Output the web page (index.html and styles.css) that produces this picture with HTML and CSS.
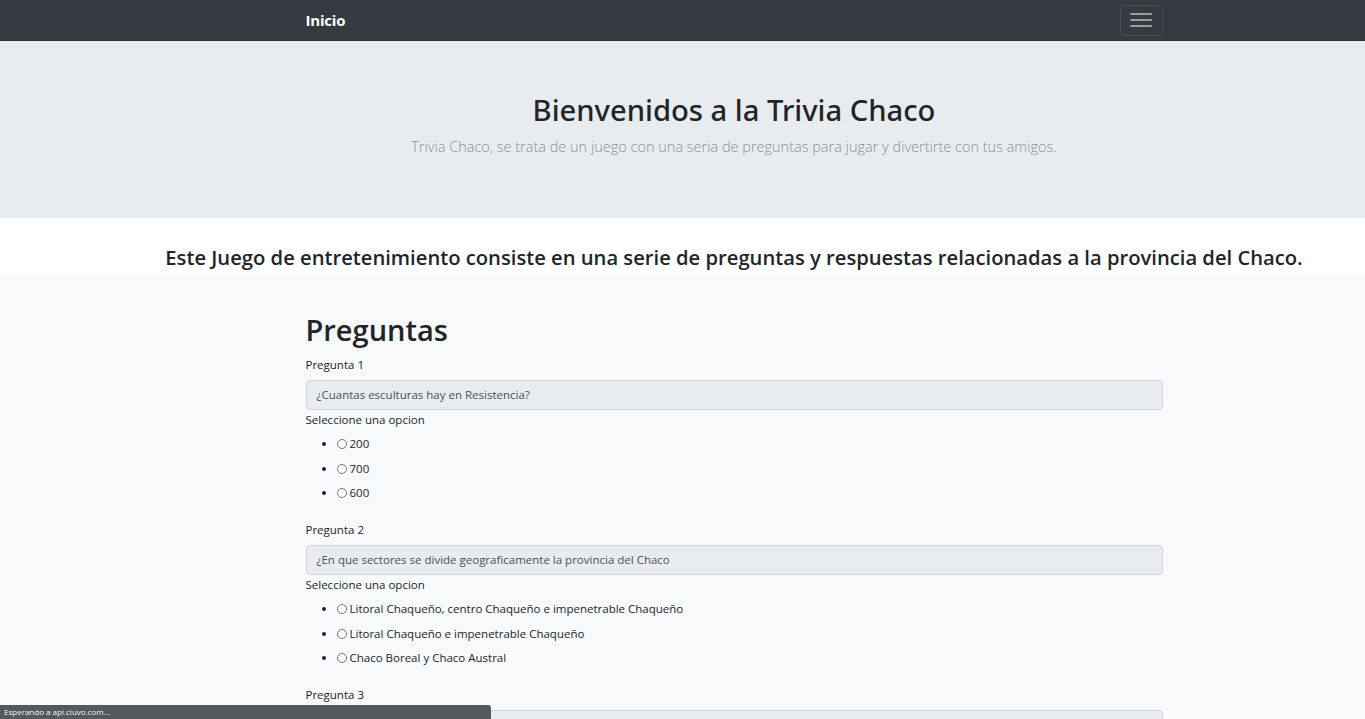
FILE: index.html
```html
<!DOCTYPE html>
<html lang="es">
<head>
<meta charset="utf-8">
<title>Trivia Chaco</title>
<link rel="stylesheet" href="styles.css">
</head>
<body>
<nav class="navbar">
  <div class="shift">
    <div class="container nav-inner">
      <a class="brand" href="#">Inicio</a>
      <button class="toggler" type="button" aria-label="menu">
        <svg width="22" height="16" viewBox="0 0 22 16"><path d="M1 2h20M1 8h20M1 14h20" stroke="rgba(255,255,255,0.5)" stroke-width="2" stroke-linecap="round"/></svg>
      </button>
    </div>
  </div>
</nav>
<header class="hero">
  <div class="shift hero-inner">
    <h1 class="hero-title">Bienvenidos a la Trivia Chaco</h1>
    <p class="hero-lead">Trivia Chaco, se trata de un juego con una seria de preguntas para jugar y divertirte con tus amigos.</p>
  </div>
</header>
<section class="intro">
  <div class="shift">
    <h4 class="intro-text">Este Juego de entretenimiento consiste en una serie de preguntas y respuestas relacionadas a la provincia del Chaco.</h4>
  </div>
</section>
<main class="content">
  <div class="shift">
    <div class="container">
      <h2 class="title">Preguntas</h2>
      <div class="question">
        <label class="qlabel">Pregunta 1</label>
        <div class="qbox">¿Cuantas esculturas hay en Resistencia?</div>
        <div class="qlabel">Seleccione una opcion</div>
        <ul class="options">
          <li><span class="radio"></span>200</li>
          <li><span class="radio"></span>700</li>
          <li><span class="radio"></span>600</li>
        </ul>
      </div>
      <div class="question">
        <label class="qlabel">Pregunta 2</label>
        <div class="qbox">¿En que sectores se divide geograficamente la provincia del Chaco</div>
        <div class="qlabel">Seleccione una opcion</div>
        <ul class="options">
          <li><span class="radio"></span>Litoral Chaqueño, centro Chaqueño e impenetrable Chaqueño</li>
          <li><span class="radio"></span>Litoral Chaqueño e impenetrable Chaqueño</li>
          <li><span class="radio"></span>Chaco Boreal y Chaco Austral</li>
        </ul>
      </div>
      <div class="question">
        <label class="qlabel">Pregunta 3</label>
        <div class="qbox">&nbsp;</div>
      </div>
    </div>
  </div>
</main>
<div class="status">Esperando a api.ciuvo.com...</div>
</body>
</html>
```
FILE: styles.css
```css
* { box-sizing: border-box; }
html, body { margin: 0; padding: 0; }
body {
  font-family: "Open Sans", "Noto Sans", sans-serif;
  background: #f8f9fa;
  color: #212529;
  overflow: hidden;
  height: 719px;
}
.shift { padding-left: 103px; }
.container { width: 857px; margin: 0 auto; }

.navbar {
  background: #343a40;
  height: 41px;
  border-bottom: 1px solid #2b3035;
}
.nav-inner {
  height: 40px;
  display: flex;
  align-items: center;
  justify-content: space-between;
}
.brand {
  color: #fff;
  font-weight: 700;
  font-size: 15px;
  text-decoration: none;
  letter-spacing: -0.2px;
}
.toggler {
  width: 43px;
  height: 31px;
  background: transparent;
  border: 1px solid rgba(255,255,255,0.1);
  border-radius: 4px;
  display: flex;
  align-items: center;
  justify-content: center;
  padding: 0;
}

.hero {
  background: #e9ecef;
  height: 177px;
}
.hero-inner { text-align: center; padding-top: 50px; }
.hero-title {
  margin: 0;
  font-family: "Noto Sans", "Open Sans", sans-serif;
  font-size: 29.2px;
  font-weight: 500;
  line-height: 38px;
  color: #212529;
}
.hero-lead {
  margin: 9px 0 0;
  font-size: 14.5px;
  font-weight: 300;
  color: #8a9096;
  line-height: 18px;
}

.intro { background: #fff; height: 56px; }
.intro-text {
  margin: 0;
  text-align: center;
  font-size: 20.2px;
  font-weight: 600;
  line-height: 28px;
  padding-top: 25px;
  white-space: nowrap;
}

.content { padding-top: 38px; }
.title {
  margin: 0 0 8px;
  font-size: 29px;
  font-weight: 600;
  line-height: 36px;
}
.question { margin-bottom: 19px; }
.qlabel {
  display: block;
  font-size: 11.5px;
  line-height: 18px;
  color: #212529;
}
.qbox {
  margin-top: 6px;
  height: 30px;
  background: #e9ecef;
  border: 1px solid #ced4da;
  border-radius: 4px;
  padding: 0 10px;
  font-size: 11.5px;
  line-height: 28px;
  color: #495057;
  margin-bottom: 1px;
}
.options {
  margin: 6px 0 0;
  padding-left: 31px;
  list-style: disc;
  font-size: 11.5px;
}
.options li {
  line-height: 18px;
  margin-bottom: 6.6px;
}
.radio {
  display: inline-block;
  width: 10px;
  height: 10px;
  border: 1px solid #767676;
  border-radius: 50%;
  background: #fff;
  margin: 0 3px 0 0;
  vertical-align: -1px;
}
.status {
  position: fixed;
  left: 0;
  bottom: 0;
  width: 491px;
  height: 14px;
  background: #53595d;
  color: #f2f2f2;
  font-size: 8px;
  line-height: 14px;
  padding-left: 4px;
  border-top-right-radius: 3px;
}
```
